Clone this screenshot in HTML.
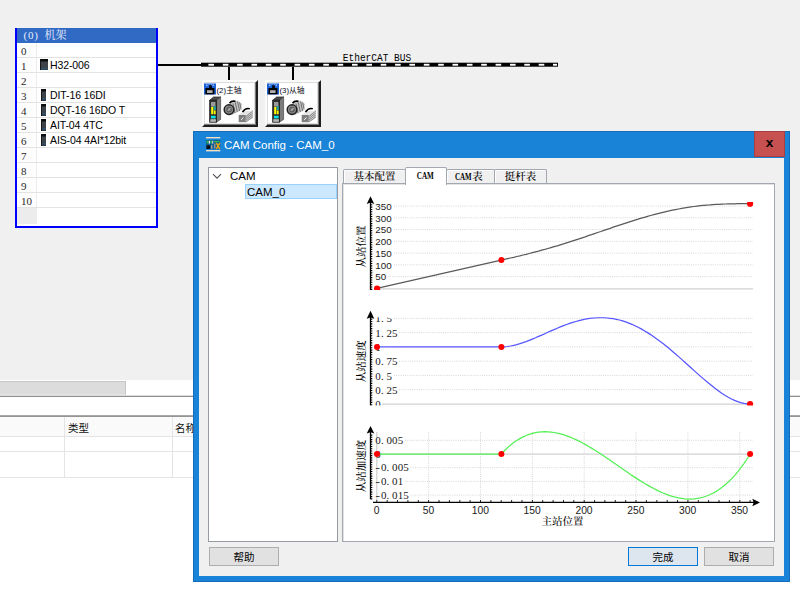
<!DOCTYPE html>
<html><head><meta charset="utf-8"><title>CAM Config</title>
<style>
*{box-sizing:border-box;margin:0;padding:0}
html,body{width:800px;height:595px;overflow:hidden;background:#f0f0f0}
body{position:relative;font-family:"Liberation Sans","Noto Sans CJK SC",sans-serif;font-size:12px;color:#000}
.abs,.ov,body>div,body>svg{position:absolute}
.song{font-family:"Liberation Serif","Noto Serif CJK SC",serif;font-weight:500}
/* rack */
#rack{left:15px;top:28px;width:143px;height:200px;background:#fff;border:2px solid #0000ff;border-top:0}
#rack .hd{position:absolute;left:0;top:0;width:139px;height:15px;background:#316ac5;color:#e9eefa;font-size:11px;line-height:14px;white-space:pre}
#rack .hd span{position:absolute;top:0}
.rr{position:absolute;left:0;width:139px;height:15px;border-bottom:1px solid #e3e3e3;font-size:10.5px;line-height:15px;white-space:nowrap;margin-top:-28px}
.rn{position:absolute;left:0;top:0;width:20px;height:14px;border-right:1px solid #ececec;padding-left:4px;padding-top:.5px;font-family:"Liberation Serif",serif;font-size:11px;color:#2a2a2a;background:#fdfdfd}
.rt{position:absolute;left:33px;top:0;letter-spacing:-0.1px}
.mi{position:absolute;left:24px;top:1px;width:5px;height:12px;background:linear-gradient(#0c0c0c,#0c0c0c 2px,#3d4348 3px,#3d4348 9px,#2b5f8a 10px,#30363b 11px);border-left:1px solid #15181a}
.mi.big{left:23px;width:8px;top:1px;height:11px}
#rack .ft{position:absolute;left:0;top:180px;width:20px;height:16px;background:#ececec}
/* bottom */
#bot{left:0;top:380px;width:800px;height:215px;background:#fff}
#bot .thumb{position:absolute;left:-1px;top:1px;width:127px;height:14px;background:#dcdcdc;border:1px solid #c6c6c6;border-bottom-color:#e2e2e2}
#bot .l1{position:absolute;left:0;top:15px;width:800px;height:2px;background:linear-gradient(#dcdcdc 50%,#8e8e8e 50%)}
#bot .l2{position:absolute;left:0;top:35px;width:800px;height:2px;background:linear-gradient(#b5b5b5,#8a8a8a)}
#bot .th{position:absolute;left:0;top:37px;width:800px;height:19px;background:#fafafa}
#bot .hl{position:absolute;left:0;width:800px;height:1px;background:#e4e4e4}
#bot .vl{position:absolute;top:37px;width:1px;height:61px;background:#e4e4e4}
#bot .tx{position:absolute;top:42px;font-size:10.5px;line-height:13px;color:#111}
/* devices */
.dev{width:56px;height:47px;background:#fff;border:2px solid;border-color:#fbfbfb #1e1e1e #1e1e1e #fbfbfb;box-shadow:inset -1px -1px 0 #7a7a7a, inset -2px -2px 0 #dedede, inset 1px 1px 0 #dcdcdc}
.dev .lb{position:absolute;left:12.5px;top:3.5px;font-size:7.8px;line-height:10px;white-space:nowrap;color:#0a0a20}
/* dialog */
#dlg{left:193px;top:131px;width:597px;height:451px;background:#1883d7;box-shadow:inset 0 0 0 1px rgba(20,80,150,.45)}
#dlg .ttl{position:absolute;left:31px;top:6.5px;color:#fff;font-size:11.5px;line-height:15px;white-space:nowrap}
#dlg .cls{position:absolute;left:561px;top:0;width:31px;height:26px;background:#c75050;color:#000;font-weight:bold;font-size:13.5px;line-height:24px;text-align:center;box-shadow:inset 0 0 0 1px rgba(120,30,30,.35)}
#dlg .in{position:absolute;left:6px;top:27px;width:585px;height:418px;background:#f0f0f0}
#tree{left:208px;top:167px;width:130px;height:375px;background:#fff;border:1px solid #969ba3}
#tree .sel{position:absolute;left:36px;top:16px;width:92px;height:15px;background:#cce8ff;border:1px solid #99d1ff}
#tree .t{position:absolute;font-size:11.5px;line-height:14px;white-space:nowrap}
#panel{left:342px;top:183px;width:433px;height:359px;background:#fff;border:1px solid #a2a7b0;box-shadow:inset 1px 1px 0 #e3e3e3}
.tab{height:14px;background:#f0f0f0;border:1px solid #a2a7b0;border-bottom:0;border-radius:2px 2px 0 0;font-size:10.5px;line-height:13px;text-align:center;white-space:nowrap;box-shadow:inset 1px 1px 0 #fff}
.tab.act{background:#fff;height:18px;z-index:3;box-shadow:none}
.btn{width:70px;height:19px;background:#e1e1e1;border:1px solid #adadad;font-size:10.5px;line-height:18px;text-align:center}
.btn.def{border-color:#0078d7;background:#dde6ee}
</style></head><body>

<div id="rack"><div class="hd song" style="font-weight:400"><span style="left:6.5px;letter-spacing:.75px">(0)</span> <span style="left:27.5px">机架</span></div>
<div class="rr" style="top:43px"><span class="rn">0</span><span class="rt"></span></div>
<div class="rr" style="top:58px"><span class="rn">1</span><i class="mi big"></i><span class="rt">H32-006</span></div>
<div class="rr" style="top:73px"><span class="rn">2</span><span class="rt"></span></div>
<div class="rr" style="top:88px"><span class="rn">3</span><i class="mi"></i><span class="rt">DIT-16 16DI</span></div>
<div class="rr" style="top:103px"><span class="rn">4</span><i class="mi"></i><span class="rt">DQT-16 16DO T</span></div>
<div class="rr" style="top:118px"><span class="rn">5</span><i class="mi"></i><span class="rt">AIT-04 4TC</span></div>
<div class="rr" style="top:133px"><span class="rn">6</span><i class="mi"></i><span class="rt">AIS-04 4AI*12bit</span></div>
<div class="rr" style="top:148px"><span class="rn">7</span><span class="rt"></span></div>
<div class="rr" style="top:163px"><span class="rn">8</span><span class="rt"></span></div>
<div class="rr" style="top:178px"><span class="rn">9</span><span class="rt"></span></div>
<div class="rr" style="top:193px"><span class="rn">10</span><span class="rt"></span></div>
<div class="ft"></div></div>

<svg class="ov" width="800" height="595" viewBox="0 0 800 595" style="left:0;top:0">
<rect x="158" y="64" width="44" height="2" fill="#000"/>
<rect x="201" y="62.7" width="357" height="4" fill="#000"/>
<rect x="208.4" y="63.8" width="5.6" height="1.9" fill="#fff"/><rect x="222.8" y="63.8" width="5.6" height="1.9" fill="#fff"/><rect x="237.1" y="63.8" width="5.6" height="1.9" fill="#fff"/><rect x="251.5" y="63.8" width="5.6" height="1.9" fill="#fff"/><rect x="265.8" y="63.8" width="5.6" height="1.9" fill="#fff"/><rect x="280.2" y="63.8" width="5.6" height="1.9" fill="#fff"/><rect x="294.6" y="63.8" width="5.6" height="1.9" fill="#fff"/><rect x="308.9" y="63.8" width="5.6" height="1.9" fill="#fff"/><rect x="323.3" y="63.8" width="5.6" height="1.9" fill="#fff"/><rect x="337.6" y="63.8" width="5.6" height="1.9" fill="#fff"/><rect x="352.0" y="63.8" width="5.6" height="1.9" fill="#fff"/><rect x="366.4" y="63.8" width="5.6" height="1.9" fill="#fff"/><rect x="380.7" y="63.8" width="5.6" height="1.9" fill="#fff"/><rect x="395.1" y="63.8" width="5.6" height="1.9" fill="#fff"/><rect x="409.4" y="63.8" width="5.6" height="1.9" fill="#fff"/><rect x="423.8" y="63.8" width="5.6" height="1.9" fill="#fff"/><rect x="438.2" y="63.8" width="5.6" height="1.9" fill="#fff"/><rect x="452.5" y="63.8" width="5.6" height="1.9" fill="#fff"/><rect x="466.9" y="63.8" width="5.6" height="1.9" fill="#fff"/><rect x="481.2" y="63.8" width="5.6" height="1.9" fill="#fff"/><rect x="495.6" y="63.8" width="5.6" height="1.9" fill="#fff"/><rect x="510.0" y="63.8" width="5.6" height="1.9" fill="#fff"/><rect x="524.3" y="63.8" width="5.6" height="1.9" fill="#fff"/><rect x="538.7" y="63.8" width="5.6" height="1.9" fill="#fff"/><rect x="553.0" y="63.8" width="4.0" height="1.9" fill="#fff"/>
<rect x="228" y="67" width="2" height="13" fill="#000"/>
<rect x="292" y="67" width="2" height="13" fill="#000"/>
<text x="342.8" y="61.1" font-family="'Liberation Mono',monospace" font-size="10.2" fill="#000" textLength="68.4" lengthAdjust="spacingAndGlyphs">EtherCAT BUS</text>
</svg>

<div class="dev" style="left:202px;top:80px"><svg style="position:absolute;left:-2px;top:-2px" width="56" height="47" viewBox="0 0 56 47">
<rect x="2" y="3.5" width="12" height="11" fill="#1f62d6"/>
<path d="M4,4.5h1.5v1.5h-1.5zM10.5,4.5h1.5v1.5h-1.5zM6.5,3.8h1v1h-1zM9,3.8h1v1h-1z" fill="#8fc0ff"/>
<rect x="7.2" y="5.3" width="2.6" height="3" fill="#000"/>
<rect x="3.4" y="8" width="9" height="6.3" fill="#000"/>
<rect x="5" y="10.2" width="5.6" height="2.8" fill="#b0b0b0"/>
<path d="M7.7,20.3L11.5,16.9H18.6L14.4,20.3Z" fill="#4a4a4a" stroke="#222" stroke-width=".6"/>
<path d="M14.4,20.3L18.6,16.9V39.4L14.4,42.2Z" fill="#7c7c7c" stroke="#333" stroke-width=".6"/>
<rect x="7.7" y="20.3" width="6.7" height="21.9" fill="#333" stroke="#1a1a1a" stroke-width=".8"/>
<rect x="9" y="22" width="4.4" height="4.6" fill="#9a9a9a"/>
<rect x="9.2" y="27" width="2.2" height="7.2" fill="#ffff00"/>
<rect x="12" y="30.5" width="1.6" height="3.7" fill="#ffff00"/>
<rect x="11.8" y="26" width="2" height="4" fill="#20a0a0"/>
<rect x="9" y="35.8" width="4.6" height="2.6" fill="#00e5e5"/>
<rect x="8.3" y="39.2" width="5.6" height="2.6" fill="#b8b8b8"/>
<path d="M24,25.5L35.5,20.5L40,24L38.5,30.5L30,35Z" fill="#c4c4c4"/>
<path d="M31,23.5L33,33M33.3,22.5L35.3,32M35.6,21.6L37.6,31M37.6,22.3L39.2,29.3" stroke="#6a6a6a" stroke-width=".9" fill="none"/>
<path d="M27.5,23.2Q29.5,20.5 33.5,21.4" stroke="#000" stroke-width="1.6" fill="none"/>
<circle cx="27" cy="29.6" r="4.8" fill="#8a8a8a" stroke="#222" stroke-width="1.5"/>
<circle cx="27" cy="29.6" r="2.4" fill="#7a7a7a" stroke="#444" stroke-width=".7"/>
<path d="M26.3,30.6L28.3,28.2" stroke="#e8e8e8" stroke-width=".8"/>
<path d="M43.8,35.2L50.8,29.5V38L43.8,42.2Z" fill="#d0d0d0"/>
<path d="M43.8,36.6L50.8,31M43.8,38.4L50.8,33M43.8,40.2L50.8,35M43.8,42L50.8,37" stroke="#787878" stroke-width=".8" fill="none"/>
<path d="M36.7,35L42,31H50L43.8,35Z" fill="#e4e4e4"/>
<path d="M40.5,32Q43.5,27.5 47.8,28.8" stroke="#000" stroke-width="1.7" fill="none"/>
<rect x="36.7" y="35" width="7.1" height="7.2" fill="#7e7e7e"/>
<path d="M39.2,40L41.4,37.4" stroke="#f0f0f0" stroke-width="1"/>
</svg><span class="lb">(2)主轴</span></div>
<div class="dev" style="left:265px;top:80px"><svg style="position:absolute;left:-2px;top:-2px" width="56" height="47" viewBox="0 0 56 47">
<rect x="2" y="3.5" width="12" height="11" fill="#1f62d6"/>
<path d="M4,4.5h1.5v1.5h-1.5zM10.5,4.5h1.5v1.5h-1.5zM6.5,3.8h1v1h-1zM9,3.8h1v1h-1z" fill="#8fc0ff"/>
<rect x="7.2" y="5.3" width="2.6" height="3" fill="#000"/>
<rect x="3.4" y="8" width="9" height="6.3" fill="#000"/>
<rect x="5" y="10.2" width="5.6" height="2.8" fill="#b0b0b0"/>
<path d="M7.7,20.3L11.5,16.9H18.6L14.4,20.3Z" fill="#4a4a4a" stroke="#222" stroke-width=".6"/>
<path d="M14.4,20.3L18.6,16.9V39.4L14.4,42.2Z" fill="#7c7c7c" stroke="#333" stroke-width=".6"/>
<rect x="7.7" y="20.3" width="6.7" height="21.9" fill="#333" stroke="#1a1a1a" stroke-width=".8"/>
<rect x="9" y="22" width="4.4" height="4.6" fill="#9a9a9a"/>
<rect x="9.2" y="27" width="2.2" height="7.2" fill="#ffff00"/>
<rect x="12" y="30.5" width="1.6" height="3.7" fill="#ffff00"/>
<rect x="11.8" y="26" width="2" height="4" fill="#20a0a0"/>
<rect x="9" y="35.8" width="4.6" height="2.6" fill="#00e5e5"/>
<rect x="8.3" y="39.2" width="5.6" height="2.6" fill="#b8b8b8"/>
<path d="M24,25.5L35.5,20.5L40,24L38.5,30.5L30,35Z" fill="#c4c4c4"/>
<path d="M31,23.5L33,33M33.3,22.5L35.3,32M35.6,21.6L37.6,31M37.6,22.3L39.2,29.3" stroke="#6a6a6a" stroke-width=".9" fill="none"/>
<path d="M27.5,23.2Q29.5,20.5 33.5,21.4" stroke="#000" stroke-width="1.6" fill="none"/>
<circle cx="27" cy="29.6" r="4.8" fill="#8a8a8a" stroke="#222" stroke-width="1.5"/>
<circle cx="27" cy="29.6" r="2.4" fill="#7a7a7a" stroke="#444" stroke-width=".7"/>
<path d="M26.3,30.6L28.3,28.2" stroke="#e8e8e8" stroke-width=".8"/>
<path d="M43.8,35.2L50.8,29.5V38L43.8,42.2Z" fill="#d0d0d0"/>
<path d="M43.8,36.6L50.8,31M43.8,38.4L50.8,33M43.8,40.2L50.8,35M43.8,42L50.8,37" stroke="#787878" stroke-width=".8" fill="none"/>
<path d="M36.7,35L42,31H50L43.8,35Z" fill="#e4e4e4"/>
<path d="M40.5,32Q43.5,27.5 47.8,28.8" stroke="#000" stroke-width="1.7" fill="none"/>
<rect x="36.7" y="35" width="7.1" height="7.2" fill="#7e7e7e"/>
<path d="M39.2,40L41.4,37.4" stroke="#f0f0f0" stroke-width="1"/>
</svg><span class="lb">(3)从轴</span></div>

<div id="bot"><div class="thumb"></div><div class="l1"></div><div class="l2"></div><div class="th"></div>
<div class="hl" style="top:56px"></div><div class="hl" style="top:71px"></div><div class="hl" style="top:97px"></div>
<div class="vl" style="left:64px"></div><div class="vl" style="left:172px"></div>
<span class="tx" style="left:68px">类型</span><span class="tx" style="left:175px">名称</span>
</div>

<div id="dlg"><div class="in"></div><svg style="position:absolute;left:13px;top:6px" width="15" height="15" viewBox="0 0 15 15">
<rect x="0" y="0" width="14.3" height="1.4" fill="#f3dfc6"/><rect x="0" y="13" width="14.3" height="1.4" fill="#f3dfc6"/>
<rect x="0" y="3" width="14.3" height="9.2" fill="#0f5e96"/>
<rect x="0.6" y="3.6" width="2" height="2.8" fill="#2cb34a"/><rect x="2.8" y="3.8" width="1.3" height="2.8" fill="#f2e8f2"/>
<rect x="4.6" y="3.6" width="1.6" height="2.8" fill="#2cb34a"/><rect x="6.2" y="3.8" width="1" height="2.8" fill="#e8d8f8"/>
<rect x="8" y="4" width="5.6" height="1.2" fill="#2cc04a"/>
<rect x="0.5" y="8.4" width="3.6" height="3.4" fill="#0a0a0a"/>
<rect x="5" y="8.2" width="1.4" height="3.6" fill="#b9a184"/><rect x="8.2" y="6.6" width="1.2" height="5" fill="#b9a184"/>
<path d="M10.3,5.8L13.9,12.2M13.9,5.8L10.3,12.2" stroke="#e6a412" stroke-width="1.5" fill="none"/><rect x="11.2" y="7.5" width="1.8" height="3.2" fill="#e6a412"/>
</svg><span class="ttl">CAM Config - CAM_0</span><div class="cls">x</div></div>
<div id="tree"><div class="sel"></div><span class="t" style="left:21px;top:1px">CAM</span><span class="t" style="left:38px;top:17px">CAM_0</span>
<svg style="position:absolute;left:3.3px;top:5px" width="10" height="7" viewBox="0 0 10 7"><path d="M1,1.2L5,5.2L9,1.2" fill="none" stroke="#505050" stroke-width="1.1"/></svg></div>
<div id="panel"></div>
<div class="tab song" style="left:343px;top:169px;width:63px">基本配置</div>
<div class="tab song" style="left:446px;top:169px;width:49px"><span style="padding-left:14px">表</span></div>
<div class="tab song" style="left:494px;top:169px;width:53px">挺杆表</div>
<div class="tab act" style="left:405px;top:167px;width:42px"></div>
<svg class="ov" width="120" height="20" viewBox="0 0 120 20" style="left:400px;top:165px;z-index:4"><g font-family="'Liberation Serif',serif" font-weight="bold" font-size="10.5" fill="#000"><text x="16.8" y="14.3" textLength="17" lengthAdjust="spacingAndGlyphs">CAM</text><text x="55" y="15.1" textLength="16.6" lengthAdjust="spacingAndGlyphs">CAM</text></g></svg>

<svg class="ov" width="800" height="595" viewBox="0 0 800 595" style="left:0;top:0">
<defs>
<clipPath id="c1"><rect x="372" y="202" width="390" height="88"/></clipPath>
<clipPath id="c2"><rect x="372" y="317.3" width="390" height="88.1"/></clipPath>
</defs>
<g font-family="'Liberation Sans',sans-serif" font-size="9.8" fill="#1a1a1a">
<g stroke="#d6d6d6" stroke-width="1" stroke-dasharray="1,1.2">
<path d="M394,206.1H753"/><path d="M394,217.8H753"/><path d="M394,229.6H753"/><path d="M394,241.3H753"/><path d="M394,253.1H753"/><path d="M394,264.8H753"/><path d="M387.6,276.6H753"/>
<path d="M394,318.4H753"/><path d="M399,332.6H753"/><path d="M394,346.9H753"/><path d="M399,361.2H753"/><path d="M394,375.4H753"/><path d="M399,389.7H753"/>
<path d="M405,440.3H753"/><path d="M410.5,467.7H753"/><path d="M405,481.4H753"/><path d="M410.5,495.1H753"/>
<path d="M428.6,432V501"/><path d="M480.5,432V501"/><path d="M532.4,432V501"/><path d="M584.2,432V501"/><path d="M636.0,432V501"/><path d="M687.9,432V501"/><path d="M739.8,432V501"/>
</g>
<path d="M380,288.9H753" stroke="#d2d2d2" stroke-width="1.3"/>
<path d="M382,404.2H753" stroke="#d2d2d2" stroke-width="1.3"/>
<path d="M372,454.2H753" stroke="#d2d2d2" stroke-width="1.3"/>
<path d="M376.8,432V500" stroke="#d2d2d2" stroke-width="1.3"/>
<g stroke="#000" stroke-width="1.3" fill="none">
<path d="M370.5,202V290"/><path d="M370.5,316V405.4"/><path d="M370.5,432V499.3"/>
</g>
<g stroke="#000" stroke-width="1.1" fill="none">
<path d="M371,289.4h1.3M371,287.0h1.3M371,284.7h1.3M371,282.3h1.3M371,280.0h1.3M371,277.6h1.3M371,275.3h1.3M371,272.9h1.3M371,270.6h1.3M371,268.2h1.3M371,265.9h1.3M371,263.5h1.3M371,261.2h1.3M371,258.8h1.3M371,256.5h1.3M371,254.1h1.3M371,251.8h1.3M371,249.4h1.3M371,247.1h1.3M371,244.7h1.3M371,242.4h1.3M371,240.0h1.3M371,237.7h1.3M371,235.3h1.3M371,233.0h1.3M371,230.6h1.3M371,228.3h1.3M371,225.9h1.3M371,223.6h1.3M371,221.2h1.3M371,218.9h1.3M371,216.5h1.3M371,214.2h1.3M371,211.8h1.3M371,209.5h1.3M371,207.1h1.3M371,204.8h1.3"/>
<path d="M371,404.8h1.3M371,402.4h1.3M371,400.0h1.3M371,397.7h1.3M371,395.3h1.3M371,392.9h1.3M371,390.5h1.3M371,388.1h1.3M371,385.8h1.3M371,383.4h1.3M371,381.0h1.3M371,378.6h1.3M371,376.2h1.3M371,373.9h1.3M371,371.5h1.3M371,369.1h1.3M371,366.7h1.3M371,364.3h1.3M371,362.0h1.3M371,359.6h1.3M371,357.2h1.3M371,354.8h1.3M371,352.4h1.3M371,350.1h1.3M371,347.7h1.3M371,345.3h1.3M371,342.9h1.3M371,340.5h1.3M371,338.2h1.3M371,335.8h1.3M371,333.4h1.3M371,331.0h1.3M371,328.6h1.3M371,326.3h1.3M371,323.9h1.3M371,321.5h1.3M371,319.1h1.3"/>
<path d="M371,498.9h1.3M371,496.6h1.3M371,494.3h1.3M371,492.1h1.3M371,489.8h1.3M371,487.5h1.3M371,485.2h1.3M371,482.9h1.3M371,480.7h1.3M371,478.4h1.3M371,476.1h1.3M371,473.8h1.3M371,471.5h1.3M371,469.3h1.3M371,467.0h1.3M371,464.7h1.3M371,462.4h1.3M371,460.1h1.3M371,457.9h1.3M371,455.6h1.3M371,453.3h1.3M371,451.0h1.3M371,448.7h1.3M371,446.5h1.3M371,444.2h1.3M371,441.9h1.3M371,439.6h1.3M371,437.3h1.3M371,435.1h1.3"/>
</g>
<g fill="#000">
<path d="M370.5,196.3L374.3,204L370.5,202.6L366.7,204Z"/>
<path d="M370.5,310.8L374.3,318.8L370.5,317.4L366.7,318.8Z"/>
<path d="M370.5,426.1L374.3,433.6L370.5,432.2L366.7,433.6Z"/>
<path d="M760,502.5L752.3,498.7L753.7,502.5L752.3,506.3Z"/>
</g>
<path d="M373,502.3H754" stroke="#000" stroke-width="1.15"/>
<path d="M376.8,502v-2M387.2,502v-2M397.5,502v-2M407.9,502v-2M418.3,502v-2M428.6,502v-2M439.0,502v-2M449.4,502v-2M459.8,502v-2M470.1,502v-2M480.5,502v-2M490.9,502v-2M501.2,502v-2M511.6,502v-2M522.0,502v-2M532.4,502v-2M542.7,502v-2M553.1,502v-2M563.5,502v-2M573.8,502v-2M584.2,502v-2M594.6,502v-2M604.9,502v-2M615.3,502v-2M625.7,502v-2M636.0,502v-2M646.4,502v-2M656.8,502v-2M667.2,502v-2M677.5,502v-2M687.9,502v-2M698.3,502v-2M708.6,502v-2M719.0,502v-2M729.4,502v-2M739.8,502v-2M750.1,502v-2" stroke="#111" stroke-width="0.9" fill="none"/>
<g>
<text x="375.3" y="209.8">350</text><text x="375.3" y="221.5">300</text><text x="375.3" y="233.2">250</text><text x="375.3" y="245.0">200</text><text x="375.3" y="256.8">150</text><text x="375.3" y="268.5">100</text><text x="375.3" y="280.2">50</text>
</g>
<g font-family="'Liberation Serif',serif" font-size="11">
<g clip-path="url(#c2)">
<text x="375.3 380.9 386.5" y="322.15000000000003">1.5</text><text x="375.3" y="407.6">0</text>
</g>
<text x="375.3 380.9 386.5 392.1" y="336.8">1.25</text><text x="375.3" y="351">1</text><text x="375.3 380.9 386.5 392.1" y="365.3">0.75</text><text x="375.3 380.9 386.5" y="379.6">0.5</text><text x="375.3 380.9 386.5 392.1" y="393.9">0.25</text>
<text x="375.3 380.9 386.5 392.1 397.7" y="444.4">0.005</text><text x="375.3" y="458">0</text><text y="471.3"><tspan x="375.3" textLength="4.8" lengthAdjust="spacingAndGlyphs">-</tspan><tspan x="380.9 386.5 392.1 397.7 403.3">0.005</tspan></text><text y="485"><tspan x="375.3" textLength="4.8" lengthAdjust="spacingAndGlyphs">-</tspan><tspan x="380.9 386.5 392.1 397.7">0.01</tspan></text><text y="498.7"><tspan x="375.3" textLength="4.8" lengthAdjust="spacingAndGlyphs">-</tspan><tspan x="380.9 386.5 392.1 397.7 403.3">0.015</tspan></text>
</g>
<g text-anchor="middle" font-size="10.3">
<text x="376.6" y="514">0</text><text x="428.4" y="514">50</text><text x="480.3" y="514">100</text><text x="532.1" y="514">150</text><text x="584.0" y="514">200</text><text x="635.8" y="514">250</text><text x="687.7" y="514">300</text><text x="739.5" y="514">350</text>
</g>
<g font-family="'Liberation Serif','Noto Serif CJK SC',serif" font-size="10.5" font-weight="500" fill="#000" text-anchor="middle">
<text x="562.6" y="524.6">主站位置</text>
<text transform="translate(365,246.5) rotate(-90)">从站位置</text>
<text transform="translate(365,361.3) rotate(-90)">从站速度</text>
<text transform="translate(365,466) rotate(-90)">从站加速度</text>
</g>
<g fill="none" stroke-width="1.25">
<path d="M376.8,288.3 L501.2,260.1 L504.4,259.4 L507.5,258.7 L510.6,258.0 L513.7,257.3 L516.8,256.5 L519.9,255.8 L523.0,255.0 L526.1,254.3 L529.2,253.5 L532.4,252.7 L535.5,251.9 L538.6,251.1 L541.7,250.2 L544.8,249.4 L547.9,248.5 L551.0,247.6 L554.1,246.7 L557.2,245.8 L560.3,244.8 L563.5,243.9 L566.6,242.9 L569.7,241.9 L572.8,240.9 L575.9,239.9 L579.0,238.9 L582.1,237.8 L585.2,236.8 L588.3,235.7 L591.5,234.7 L594.6,233.6 L597.7,232.5 L600.8,231.5 L603.9,230.4 L607.0,229.3 L610.1,228.3 L613.2,227.2 L616.3,226.2 L619.5,225.1 L622.6,224.1 L625.7,223.1 L628.8,222.1 L631.9,221.1 L635.0,220.1 L638.1,219.2 L641.2,218.2 L644.3,217.3 L647.5,216.4 L650.6,215.5 L653.7,214.7 L656.8,213.9 L659.9,213.1 L663.0,212.3 L666.1,211.6 L669.2,210.9 L672.3,210.2 L675.5,209.6 L678.6,209.0 L681.7,208.4 L684.8,207.9 L687.9,207.4 L691.0,206.9 L694.1,206.5 L697.2,206.1 L700.3,205.7 L703.5,205.4 L706.6,205.1 L709.7,204.9 L712.8,204.6 L715.9,204.4 L719.0,204.3 L722.1,204.1 L725.2,204.0 L728.3,203.9 L731.5,203.8 L734.6,203.8 L737.7,203.7 L740.8,203.7 L743.9,203.7 L747.0,203.7 L750.1,203.7" stroke="#5a5a5a" clip-path="url(#c1)"/>
<path d="M376.8,346.9 L501.2,346.9 L504.4,346.8 L507.5,346.5 L510.6,346.0 L513.7,345.4 L516.8,344.6 L519.9,343.7 L523.0,342.7 L526.1,341.6 L529.2,340.4 L532.4,339.1 L535.5,337.8 L538.6,336.4 L541.7,335.1 L544.8,333.7 L547.9,332.3 L551.0,330.9 L554.1,329.6 L557.2,328.2 L560.3,326.9 L563.5,325.7 L566.6,324.5 L569.7,323.4 L572.8,322.4 L575.9,321.5 L579.0,320.6 L582.1,319.9 L585.2,319.2 L588.3,318.7 L591.5,318.2 L594.6,317.9 L597.7,317.7 L600.8,317.7 L603.9,317.7 L607.0,317.9 L610.1,318.3 L613.2,318.7 L616.3,319.3 L619.5,320.0 L622.6,320.9 L625.7,321.9 L628.8,323.1 L631.9,324.3 L635.0,325.7 L638.1,327.3 L641.2,328.9 L644.3,330.7 L647.5,332.6 L650.6,334.6 L653.7,336.7 L656.8,338.9 L659.9,341.2 L663.0,343.6 L666.1,346.1 L669.2,348.6 L672.3,351.2 L675.5,353.9 L678.6,356.6 L681.7,359.4 L684.8,362.2 L687.9,365.0 L691.0,367.8 L694.1,370.6 L697.2,373.4 L700.3,376.1 L703.5,378.9 L706.6,381.5 L709.7,384.1 L712.8,386.6 L715.9,389.0 L719.0,391.3 L722.1,393.5 L725.2,395.5 L728.3,397.3 L731.5,399.0 L734.6,400.4 L737.7,401.7 L740.8,402.6 L743.9,403.4 L747.0,403.8 L750.1,404.0" stroke="#5555ff" clip-path="url(#c2)"/>
<path d="M376.8,454.0 L501.2,454.0 L504.4,450.7 L507.5,447.7 L510.6,445.0 L513.7,442.6 L516.8,440.5 L519.9,438.6 L523.0,436.9 L526.1,435.5 L529.2,434.3 L532.4,433.4 L535.5,432.7 L538.6,432.2 L541.7,431.9 L544.8,431.7 L547.9,431.8 L551.0,432.1 L554.1,432.5 L557.2,433.1 L560.3,433.8 L563.5,434.7 L566.6,435.8 L569.7,436.9 L572.8,438.2 L575.9,439.6 L579.0,441.1 L582.1,442.7 L585.2,444.4 L588.3,446.2 L591.5,448.1 L594.6,450.0 L597.7,452.0 L600.8,454.0 L603.9,456.1 L607.0,458.2 L610.1,460.3 L613.2,462.5 L616.3,464.6 L619.5,466.8 L622.6,469.0 L625.7,471.1 L628.8,473.3 L631.9,475.4 L635.0,477.4 L638.1,479.4 L641.2,481.4 L644.3,483.3 L647.5,485.1 L650.6,486.9 L653.7,488.5 L656.8,490.1 L659.9,491.6 L663.0,493.0 L666.1,494.2 L669.2,495.3 L672.3,496.3 L675.5,497.2 L678.6,497.8 L681.7,498.4 L684.8,498.8 L687.9,499.0 L691.0,499.0 L694.1,498.8 L697.2,498.4 L700.3,497.8 L703.5,497.0 L706.6,496.0 L709.7,494.8 L712.8,493.3 L715.9,491.6 L719.0,489.6 L722.1,487.3 L725.2,484.8 L728.3,482.0 L731.5,478.9 L734.6,475.6 L737.7,471.9 L740.8,467.9 L743.9,463.6 L747.0,459.0 L750.1,454.0" stroke="#55f055"/>
</g>
<g fill="#ff0000">
<g clip-path="url(#c1)"><circle cx="377.1" cy="288.6" r="3.1"/><circle cx="750.1" cy="203.7" r="3.1"/></g>
<circle cx="501.4" cy="260.1" r="3"/>
<g clip-path="url(#c2)"><circle cx="750.1" cy="404.0" r="3.1"/></g>
<circle cx="377.0" cy="346.9" r="3"/><circle cx="501.4" cy="346.9" r="3"/>
<circle cx="377.0" cy="454.1" r="3"/><circle cx="501.4" cy="454.1" r="3"/><circle cx="750.1" cy="454.1" r="3"/>
</g>
</g>
</svg>

<div class="btn" style="left:209px;top:547px">帮助</div>
<div class="btn def" style="left:628px;top:547px">完成</div>
<div class="btn" style="left:704px;top:547px">取消</div>
</body></html>
